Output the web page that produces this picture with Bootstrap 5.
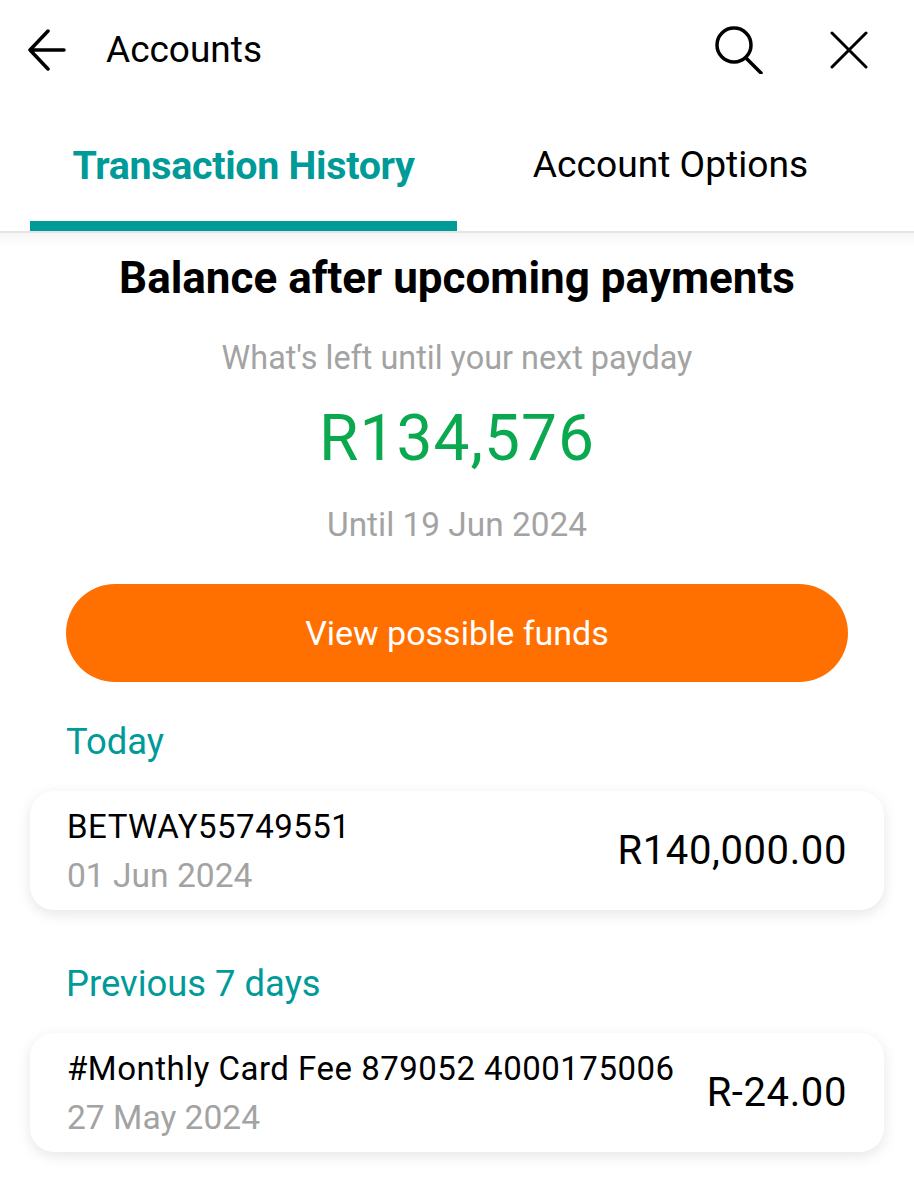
<!DOCTYPE html>
<html lang="en">
<head>
    <meta charset="UTF-8">
    <meta name="viewport" content="width=device-width, initial-scale=1.0">
    <title>Accounts</title>
    <link href="https://cdn.jsdelivr.net/npm/bootstrap@5.3.0/dist/css/bootstrap.min.css" rel="stylesheet">
    <style>
        body {
            font-family: Roboto, "Liberation Sans", sans-serif;
            color: #000;
            background-color: #fff;
            padding-bottom: 47px;
        }
        .top-bar {
            height: 100px;
            padding: 0 46px 0 28px;
        }
        .top-title {
            font-size: 37px;
            margin-left: 40px;
        }
        .close-icon {
            margin-left: 66px;
        }
        .tab-strip {
            height: 133px;
            padding: 0 30px;
            border-bottom: 2px solid #e4e4e4;
        }
        .tab-item {
            width: 427px;
            height: 131px;
            font-size: 37.2px;
            padding-top: 37px;
            text-align: center;
            flex: none;
        }
        .tab-active {
            color: #009a98;
            font-size: 39.4px;
            font-weight: 700;
            letter-spacing: -0.3px;
            padding-top: 36px;
            border-bottom: 10px solid #009a98;
        }
        .balance-box {
            background: linear-gradient(#f6f6f6, #fff 14px);
            padding-top: 19px;
        }
        .balance-title {
            font-size: 44px;
            font-weight: 700;
            line-height: 52px;
        }
        .balance-sub {
            font-size: 32.4px;
            color: #a3a3a3;
            line-height: 42px;
            margin-top: 33px;
        }
        .balance-amount {
            font-size: 64px;
            color: #0aa84f;
            line-height: 76px;
            letter-spacing: 1px;
            margin-top: 22px;
        }
        .balance-until {
            font-size: 33.4px;
            color: #a3a3a3;
            line-height: 42px;
            margin-top: 27px;
        }
        .funds-btn {
            display: block;
            width: 782px;
            height: 98px;
            margin: 38px auto 0;
            padding-top: 6px;
            border: none;
            border-radius: 49px;
            background-color: #ff7000;
            color: #fff;
            font-size: 34px;
        }
        .group-title {
            color: #009a98;
            font-size: 36.4px;
            line-height: 48px;
            padding-left: 66px;
            margin-top: 36px;
        }
        .group-next {
            margin-top: 50px;
        }
        .txn-card {
            margin: 25px 30px 0;
            height: 119px;
            padding: 2px 37px 0;
            border: none;
            border-radius: 24px;
            box-shadow: 0 4px 14px rgba(0, 0, 0, 0.1);
        }
        .txn-name {
            font-size: 33px;
            line-height: 44px;
            letter-spacing: 0.5px;
        }
        .txn-date {
            font-size: 33.6px;
            line-height: 44px;
            color: #a3a3a3;
            margin-top: 5px;
        }
        .txn-amount {
            font-size: 40px;
            letter-spacing: 0.6px;
            padding-bottom: 2px;
        }
    </style>
</head>
<body>
    <!-- Header -->
    <div class="top-bar d-flex align-items-center">
        <svg width="38" height="42" viewBox="0 0 38 42" fill="none" stroke="#000" stroke-width="3.5" stroke-linecap="round" stroke-linejoin="round">
            <path d="M20 2 2 21l18 19M2 21h34"/>
        </svg>
        <span class="top-title">Accounts</span>
        <svg class="ms-auto" width="50" height="48" viewBox="0 0 50 48" fill="none" stroke="#000" stroke-width="3.5" stroke-linecap="round">
            <circle cx="20" cy="19" r="17"/>
            <path d="M33 33 47 47"/>
        </svg>
        <svg class="close-icon" width="38" height="38" viewBox="0 0 38 38" fill="none" stroke="#000" stroke-width="3" stroke-linecap="round">
            <path d="M2 2 36 36M36 2 2 36"/>
        </svg>
    </div>

    <!-- Tabs -->
    <div class="tab-strip d-flex">
        <div class="tab-item tab-active">Transaction History</div>
        <div class="tab-item">Account Options</div>
    </div>

    <!-- Balance -->
    <div class="balance-box text-center">
        <div class="balance-title">Balance after upcoming payments</div>
        <div class="balance-sub">What's left until your next payday</div>
        <div class="balance-amount">R134,576</div>
        <div class="balance-until">Until 19 Jun 2024</div>
    </div>
    <button type="button" class="btn funds-btn">View possible funds</button>

    <!-- Transactions -->
    <div class="group-title">Today</div>
    <div class="card txn-card d-flex flex-row align-items-center justify-content-between">
        <div>
            <div class="txn-name">BETWAY55749551</div>
            <div class="txn-date">01 Jun 2024</div>
        </div>
        <div class="txn-amount">R140,000.00</div>
    </div>

    <div class="group-title group-next">Previous 7 days</div>
    <div class="card txn-card d-flex flex-row align-items-center justify-content-between">
        <div>
            <div class="txn-name">#Monthly Card Fee 879052 4000175006</div>
            <div class="txn-date">27 May 2024</div>
        </div>
        <div class="txn-amount">R-24.00</div>
    </div>

    <script src="https://cdn.jsdelivr.net/npm/bootstrap@5.3.0/dist/js/bootstrap.bundle.min.js"></script>
</body>
</html>
